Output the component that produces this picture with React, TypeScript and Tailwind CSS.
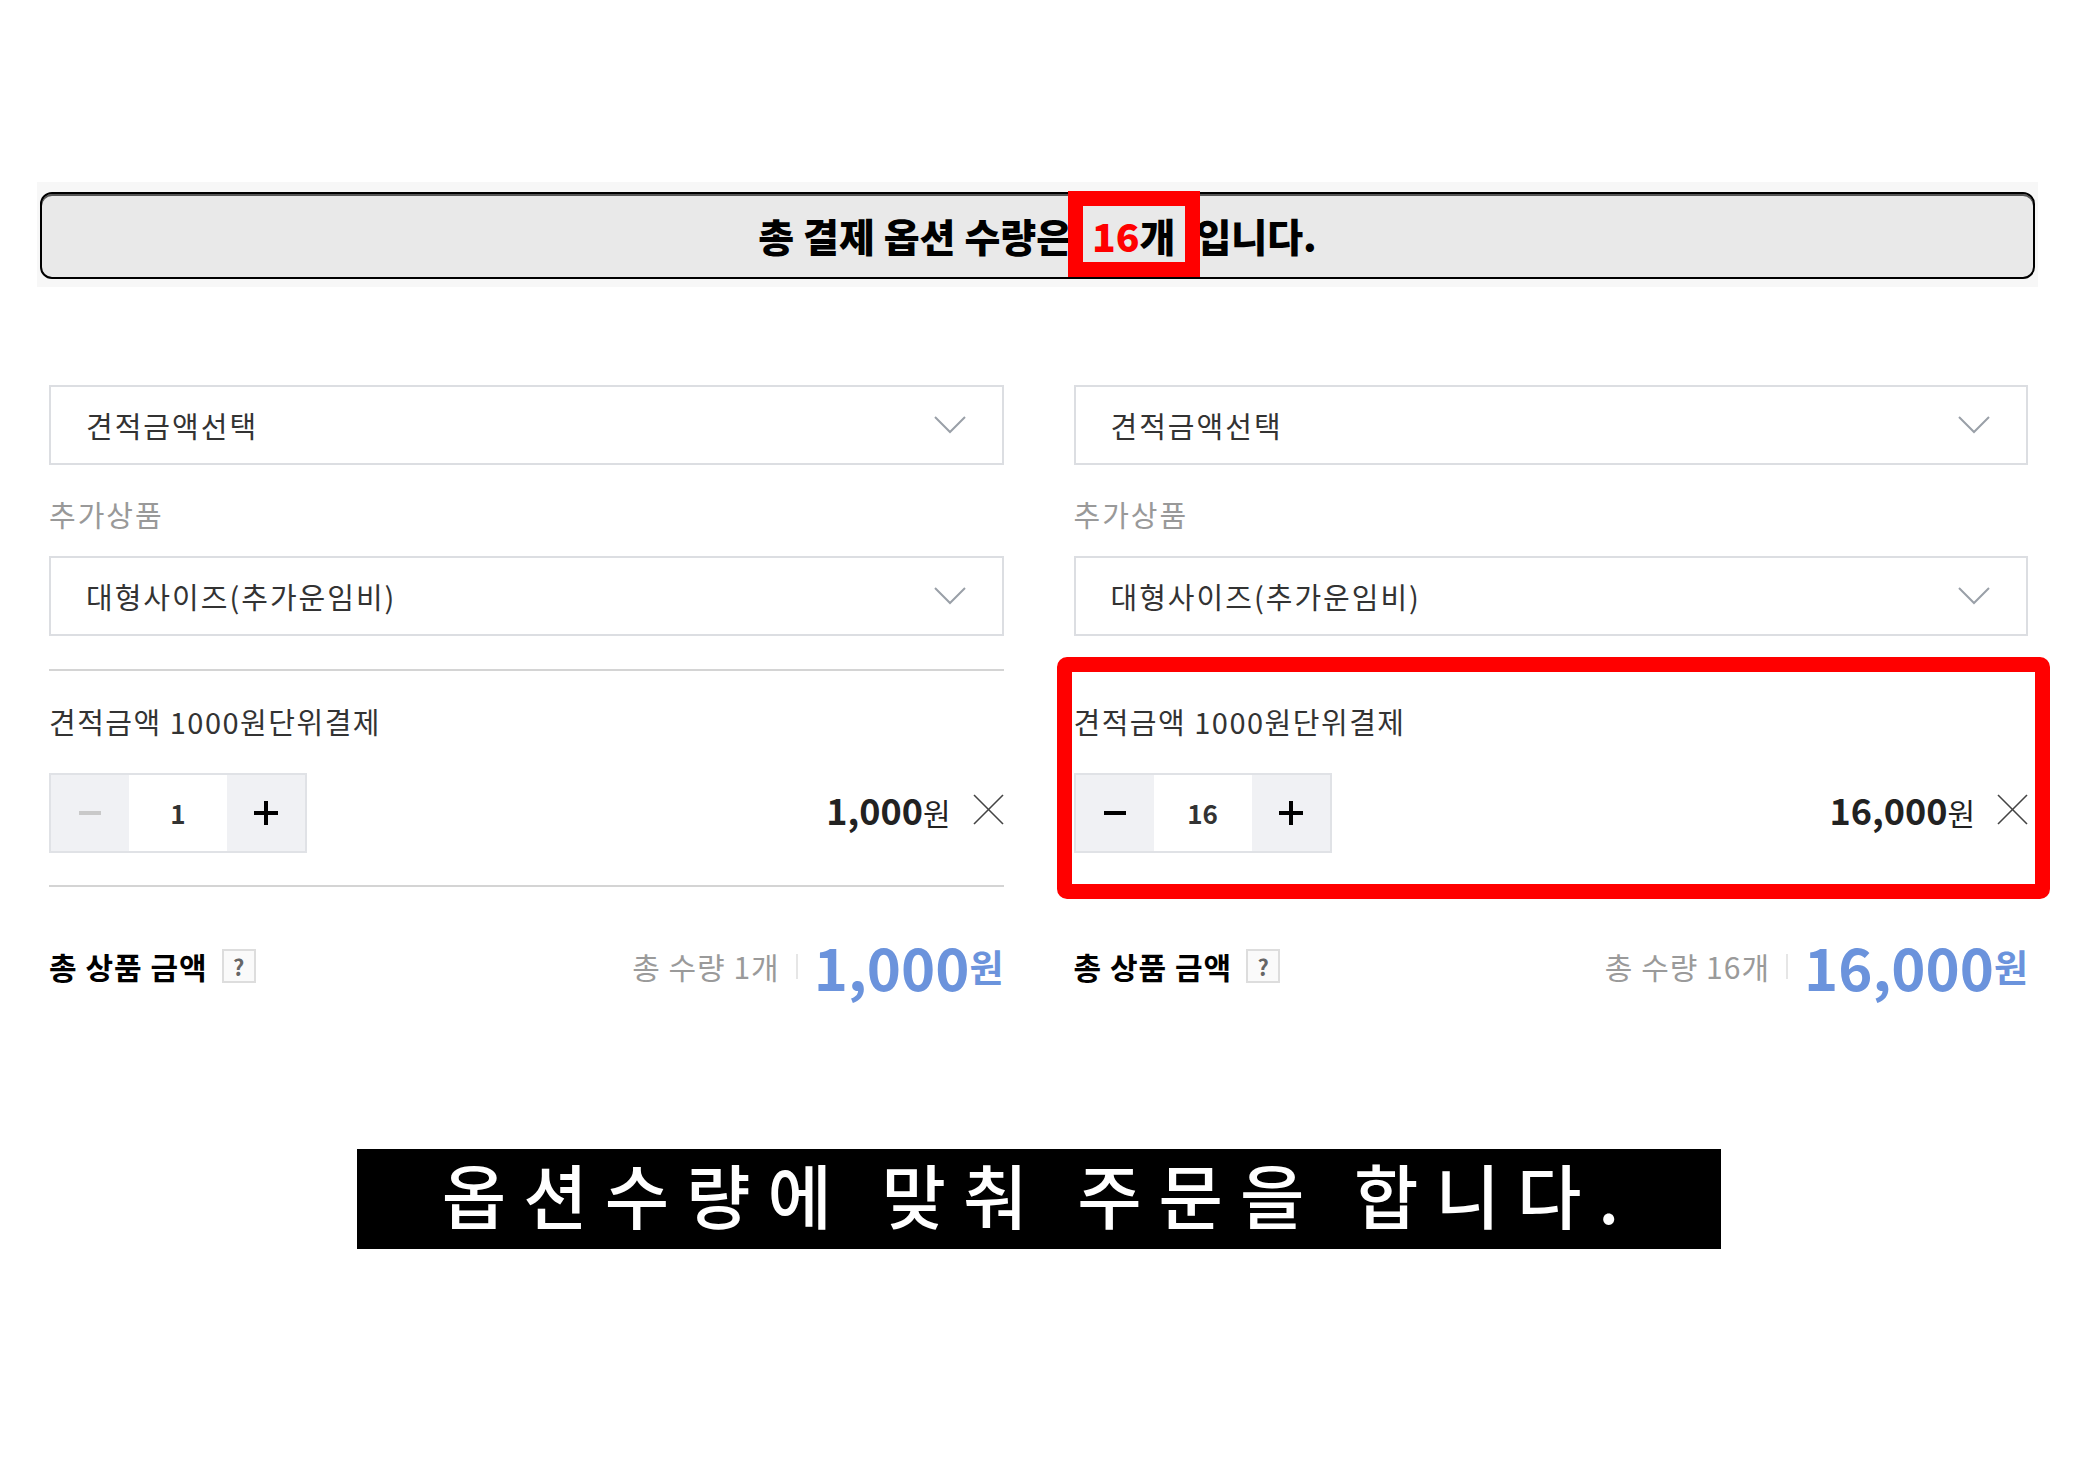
import React from 'react';

const kr = 'font-["Noto_Sans_CJK_KR",sans-serif]';

const Chevron = () => (
  <svg width="32" height="18" viewBox="0 0 32 18" fill="none">
    <polyline points="1,1 16,16 31,1" stroke="#9aa0a8" strokeWidth="2" />
  </svg>
);

const CloseX = () => (
  <svg width="31" height="31" viewBox="0 0 31 31" fill="none">
    <line x1="1" y1="1" x2="30" y2="30" stroke="#444" strokeWidth="1.6" />
    <line x1="30" y1="1" x2="1" y2="30" stroke="#444" strokeWidth="1.6" />
  </svg>
);

const SelectBox = ({ label, className = '' }: { label: string; className?: string }) => (
  <div className={`flex h-[80px] items-center justify-between border-2 border-[#dcdee2] bg-white pl-[35px] pr-[36px] ${className}`}>
    <span className="text-[29px] leading-none tracking-[2px] text-[#333]">{label}</span>
    <Chevron />
  </div>
);

const Column = ({ qty, highlight }: { qty: number; highlight?: boolean }) => {
  const price = (qty * 1000).toLocaleString('en-US');
  return (
    <div className="flex flex-col">
      <SelectBox label="견적금액선택" />
      <div className="mt-[35px] text-[29px] leading-none tracking-[2px] text-[#999]">추가상품</div>
      <SelectBox label="대형사이즈(추가운임비)" className="mt-[27px]" />

      {/* 옵션 영역 */}
      <div className="relative mt-[33px]">
        <div className="h-[2px] bg-[#d4d4d4]" />
        <div className="mt-[36px] text-[29px] leading-none tracking-[1.5px] text-[#333]">견적금액 1000원단위결제</div>
        <div className="mt-[37px] flex items-center justify-between">
          <div className="flex h-[80px] border-2 border-[#e0e2e6]">
            <button className="flex w-[78px] items-center justify-center bg-[#f0f1f4]">
              <span className={`h-[4px] w-[22px] ${qty > 1 ? 'bg-black' : 'bg-[#c9c9c9]'}`} />
            </button>
            <div className="flex w-[98px] items-center justify-center bg-white text-[26px] font-bold leading-none text-[#333]">
              {qty}
            </div>
            <button className="relative flex w-[78px] items-center justify-center bg-[#f0f1f4]">
              <span className="absolute h-[4px] w-[24px] bg-black" />
              <span className="absolute h-[24px] w-[4px] bg-black" />
            </button>
          </div>
          <div className="mb-[8px] flex items-center gap-[22px]">
            <div className="flex items-baseline text-[#222]">
              <span className="text-[36px] font-bold leading-none">{price}</span>
              <span className="text-[30px] leading-none">원</span>
            </div>
            <CloseX />
          </div>
        </div>
        <div className="mt-[32px] h-[2px] bg-[#d4d4d4]" />
        {highlight && (
          <div className="pointer-events-none absolute -bottom-[12px] -left-[17px] -right-[22px] -top-[12px] rounded-[10px] border-[15px] border-[#ff0000]" />
        )}
      </div>

      {/* 총 상품 금액 */}
      <div className="mt-[51px] flex h-[56px] items-center justify-between">
        <div className="flex items-center gap-[14px]">
          <span className="text-[30px] font-bold leading-none tracking-[1px] text-black">총 상품 금액</span>
          <span className="flex h-[34px] w-[34px] items-center justify-center border-2 border-[#dddddd] bg-[#fafafa] text-[22px] font-bold leading-none text-[#666]">
            ?
          </span>
        </div>
        <div className="flex items-center">
          <span className="text-[30px] leading-none tracking-[1px] text-[#9a9a9a]">총 수량 {qty}개</span>
          <span className="mx-[16px] h-[25px] w-[2px] bg-[#e6e6e6]" />
          <span className="text-[58px] font-bold leading-none text-[#6b93dc]">{price}</span>
          <span className="text-[37px] font-bold leading-none text-[#6b93dc]">원</span>
        </div>
      </div>
    </div>
  );
};

export default function App() {
  return (
    <div className={`min-h-[1479px] w-[2096px] bg-white pt-[182px] ${kr}`}>
      {/* 상단 안내 */}
      <div className="ml-[37px] w-[2001px] bg-[#f7f7f7] px-[3px] pb-[8px] pt-[10px]">
        <div className="flex h-[87px] items-stretch justify-center rounded-[12px] border-2 border-black bg-[#e9e9e9] shadow-[inset_0_2px_0_#555]">
          <div className="flex items-center gap-[20px] text-[39px] font-black leading-none text-black">
            <span>총 결제 옵션 수량은</span>
            <span className="relative flex h-full items-center">
              <span className="text-[#ff0000]">16</span>
              <span>개</span>
              <span className="absolute -left-[24px] -right-[25px] -top-[3px] bottom-0 border-[15px] border-[#ff0000]" />
            </span>
            <span>입니다.</span>
          </div>
        </div>
      </div>

      {/* 옵션 2열 */}
      <div className="mt-[98px] grid grid-cols-2 gap-[70px] pl-[49px] pr-[68px]">
        <Column qty={1} />
        <Column qty={16} highlight />
      </div>

      {/* 자막 */}
      <div className="ml-[357px] mt-[155px] flex h-[100px] w-[1364px] items-center justify-center bg-black pb-[10px]">
        <span className="text-[70px] font-medium leading-none tracking-[17px] text-white">
          옵션수량에 맞춰 주문을 합니다.
        </span>
      </div>
    </div>
  );
}
